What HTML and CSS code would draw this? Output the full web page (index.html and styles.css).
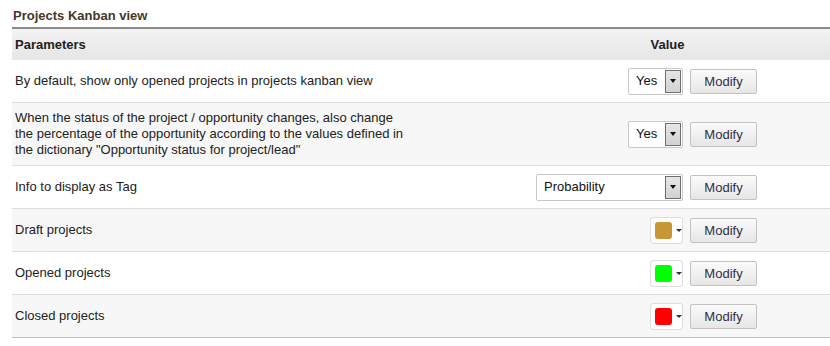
FILE: index.html
```html
<!DOCTYPE html>
<html>
<head>
<meta charset="utf-8">
<link rel="stylesheet" href="styles.css">
</head>
<body>
<div class="page">
  <div class="title">Projects Kanban view</div>
  <table class="params">
    <thead>
      <tr>
        <th class="col-param">Parameters</th>
        <th class="col-value">Value</th>
      </tr>
    </thead>
    <tbody>
      <tr>
        <td class="col-param"><span class="label">By default, show only opened projects in projects kanban view</span></td>
        <td class="col-value">
          <div class="ctrls">
            <div class="select sel-yes"><span class="sel-text">Yes</span><span class="sel-arrow"><span class="tri"></span></span></div>
            <button class="btn">Modify</button>
          </div>
        </td>
      </tr>
      <tr class="alt">
        <td class="col-param"><span class="label">When the status of the project / opportunity changes, also change the percentage of the opportunity according to the values defined in the dictionary "Opportunity status for project/lead"</span></td>
        <td class="col-value">
          <div class="ctrls">
            <div class="select sel-yes"><span class="sel-text">Yes</span><span class="sel-arrow"><span class="tri"></span></span></div>
            <button class="btn">Modify</button>
          </div>
        </td>
      </tr>
      <tr>
        <td class="col-param"><span class="label">Info to display as Tag</span></td>
        <td class="col-value">
          <div class="ctrls">
            <div class="select sel-wide"><span class="sel-text">Probability</span><span class="sel-arrow"><span class="tri"></span></span></div>
            <button class="btn">Modify</button>
          </div>
        </td>
      </tr>
      <tr class="alt">
        <td class="col-param"><span class="label">Draft projects</span></td>
        <td class="col-value">
          <div class="ctrls">
            <div class="color"><span class="swatch sw-draft"></span><span class="ctri"></span></div>
            <button class="btn">Modify</button>
          </div>
        </td>
      </tr>
      <tr>
        <td class="col-param"><span class="label">Opened projects</span></td>
        <td class="col-value">
          <div class="ctrls">
            <div class="color"><span class="swatch sw-open"></span><span class="ctri"></span></div>
            <button class="btn">Modify</button>
          </div>
        </td>
      </tr>
      <tr class="alt last">
        <td class="col-param"><span class="label">Closed projects</span></td>
        <td class="col-value">
          <div class="ctrls">
            <div class="color"><span class="swatch sw-closed"></span><span class="ctri"></span></div>
            <button class="btn">Modify</button>
          </div>
        </td>
      </tr>
    </tbody>
  </table>
</div>
</body>
</html>
```

FILE: styles.css
```css
html, body {
  margin: 0;
  padding: 0;
  background: #ffffff;
}
body {
  font-family: "Liberation Sans", Arial, sans-serif;
  font-size: 13px;
  color: #222222;
}
.page {
  padding: 8px 0 0 12px;
}
.title {
  font-weight: bold;
  font-size: 13px;
  color: #45372a;
  line-height: 16px;
  height: 19px;
  padding-left: 1px;
}
.params {
  width: 818px;
  border-collapse: collapse;
  border-top: 2px solid #8a8a8a;
}
.params th {
  height: 31px;
  padding: 0 3px;
  font-weight: bold;
  color: #222222;
  background: linear-gradient(#f3f3f3, #e6e6e6);
}
.params th.col-param {
  text-align: left;
}
.params th.col-value {
  text-align: center;
}
.col-param {
  width: 487px;
}
.params td {
  padding: 7px 3px;
  height: 28px;
  line-height: 16px;
  vertical-align: middle;
  border-bottom: 1px solid #dddddd;
  background: #ffffff;
}
.params tr.alt td {
  background: #f7f7f7;
}
.params tr.last td {
  border-bottom-color: #bdbdbd;
}
.label {
  display: block;
  max-width: 392px;
}
.params td.col-value {
  padding-right: 73px;
}
.ctrls {
  display: flex;
  justify-content: flex-end;
  align-items: center;
  gap: 7px;
}
.select {
  box-sizing: border-box;
  height: 27px;
  border: 1px solid #c8c8c8;
  border-radius: 2px;
  background: #ffffff;
  display: flex;
  align-items: stretch;
  justify-content: space-between;
}
.sel-yes {
  width: 55px;
}
.sel-wide {
  width: 147px;
}
.sel-text {
  display: flex;
  align-items: center;
  padding-left: 7px;
  color: #111111;
  font-size: 13px;
}
.sel-arrow {
  box-sizing: border-box;
  width: 16px;
  margin: 1px 1px 1px 0;
  border: 1px solid #6f6f6f;
  background: linear-gradient(#e6e6e6, #d2d2d2);
  display: flex;
  align-items: center;
  justify-content: center;
}
.tri {
  width: 0;
  height: 0;
  border-left: 3px solid transparent;
  border-right: 3px solid transparent;
  border-top: 4px solid #111111;
}
.btn {
  box-sizing: border-box;
  width: 67px;
  height: 25px;
  padding: 0;
  font-family: "Liberation Sans", Arial, sans-serif;
  font-size: 13px;
  color: #2e2e4a;
  border: 1px solid #c2c2c2;
  border-radius: 2px;
  background: linear-gradient(#fbfbfb, #e6e6e6);
}
.color {
  box-sizing: border-box;
  width: 33px;
  height: 27px;
  border: 1px solid #dddddd;
  border-radius: 3px;
  background: #ffffff;
  display: flex;
  align-items: center;
  padding-left: 4px;
}
.swatch {
  width: 17px;
  height: 17px;
  border-radius: 3px;
}
.sw-draft {
  background: #c99636;
}
.sw-open {
  background: #00ff00;
}
.sw-closed {
  background: #ff0000;
}
.ctri {
  margin-left: 4px;
  width: 0;
  height: 0;
  border-left: 3px solid transparent;
  border-right: 3px solid transparent;
  border-top: 3px solid #333333;
}
```
